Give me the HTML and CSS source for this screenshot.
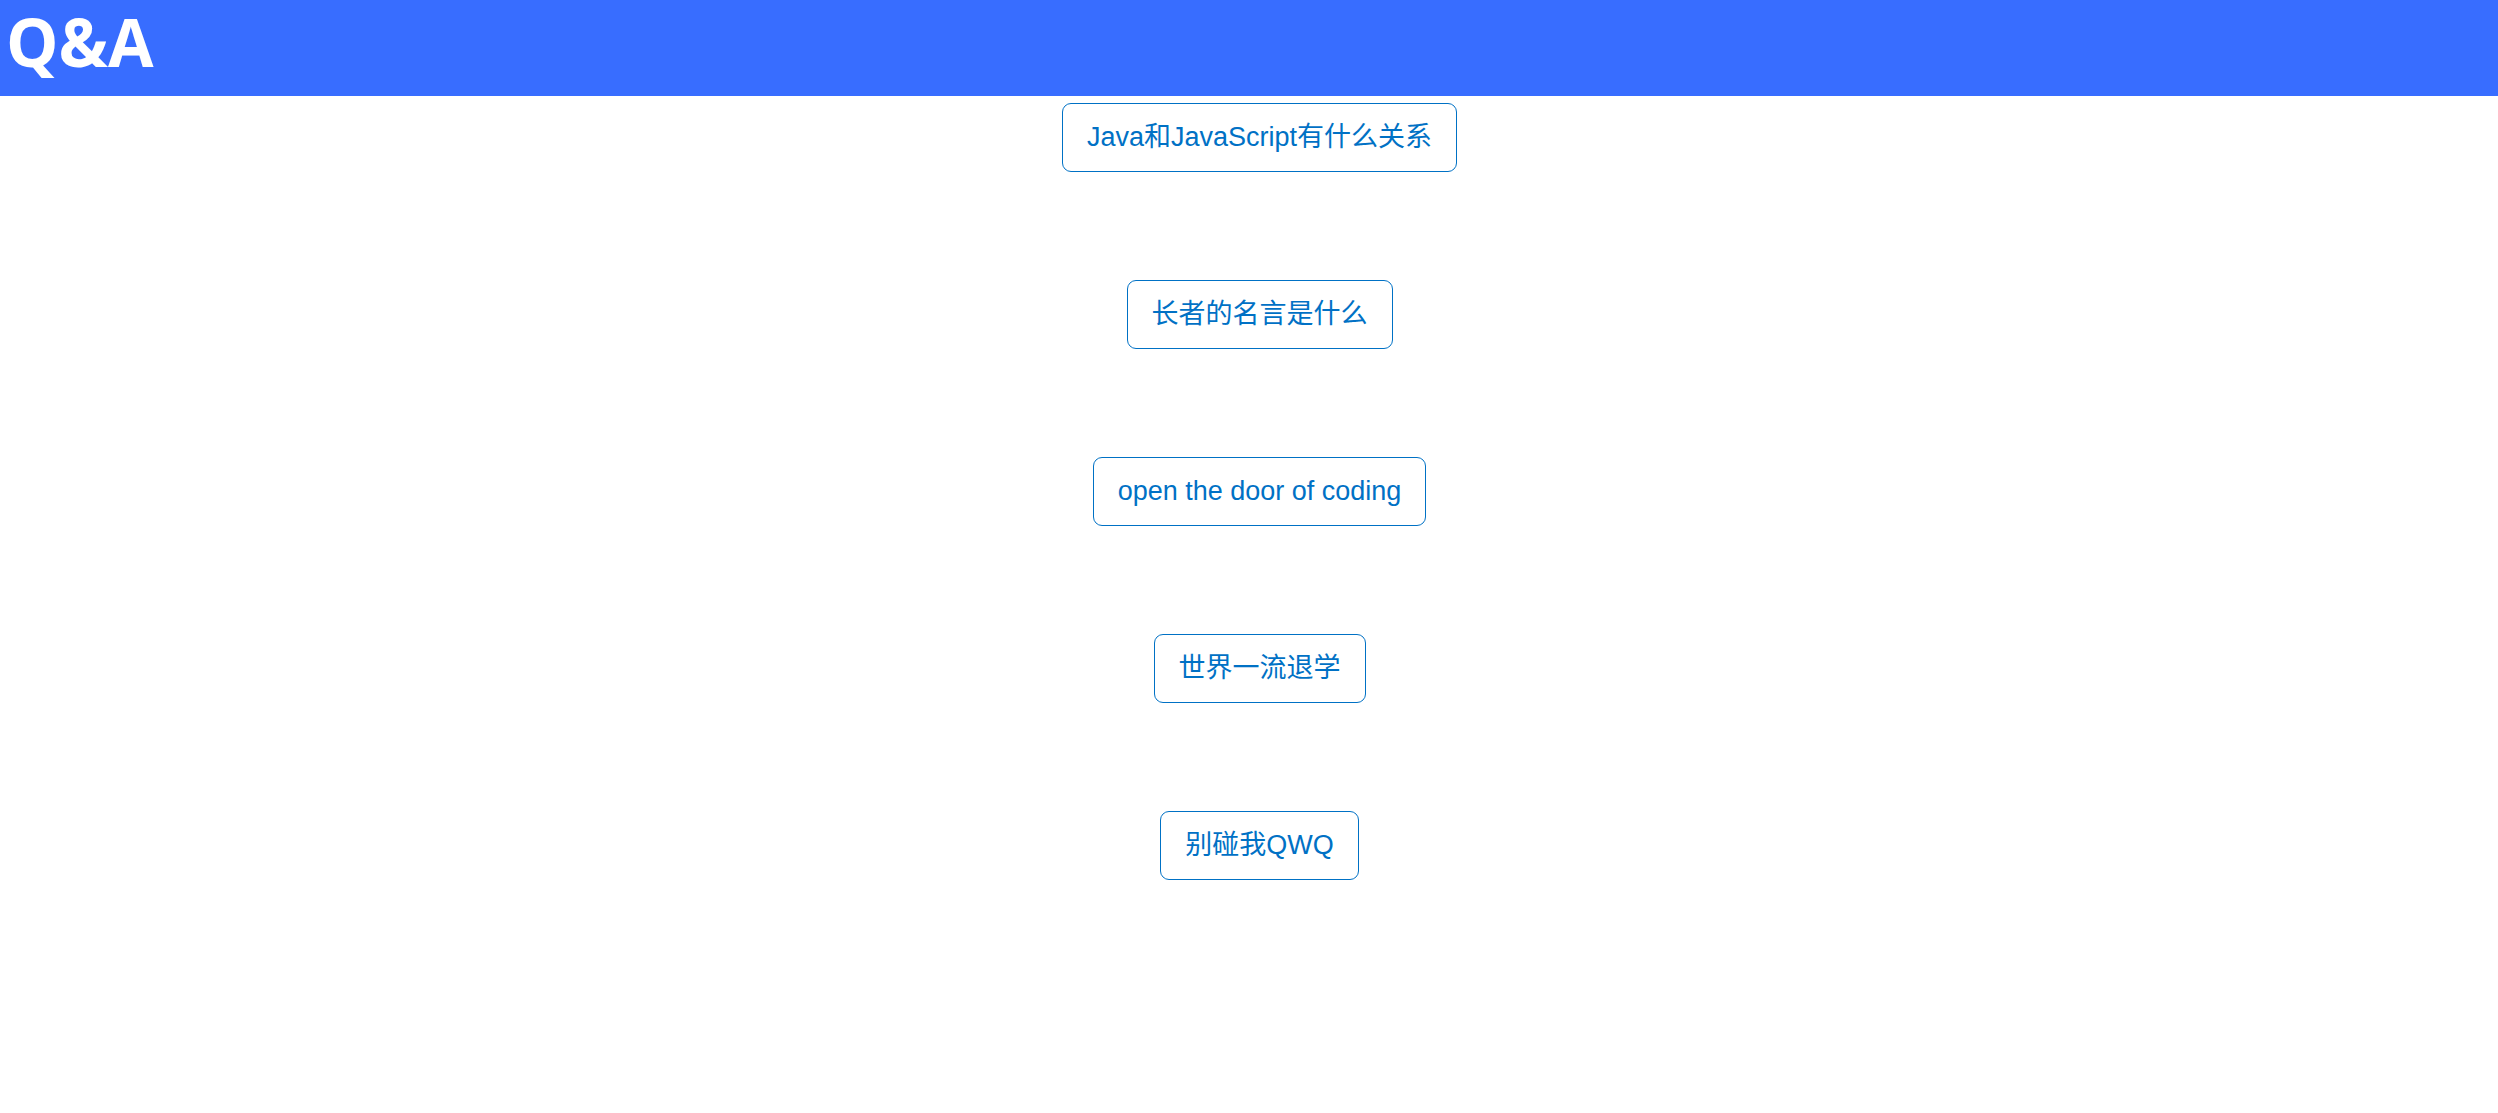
FILE: index.html
```html
<!DOCTYPE html>
<html lang="zh-CN">
<head>
<meta charset="utf-8">
<title>Q&amp;A</title>
<link rel="stylesheet" href="styles.css">
</head>
<body>
<header class="banner"><h1 class="title">Q&amp;A</h1></header>
<main class="questions">
<button class="question" type="button">Java和JavaScript有什么关系</button>
<button class="question" type="button">长者的名言是什么</button>
<button class="question" type="button">open the door of coding</button>
<button class="question" type="button">世界一流退学</button>
<button class="question" type="button">别碰我QWQ</button>
</main>
</body>
</html>
```
FILE: styles.css
```css
body {
  margin: 0;
  background: #fff;
  font-family: "Liberation Sans", "Noto Sans CJK SC", sans-serif;
}
.banner {
  box-sizing: border-box;
  height: 96px;
  padding: 0 6px;
  background: #386dff;
}
.title {
  margin: 0;
  color: #fff;
  font: 700 66px/82px "Open Sans", "Noto Sans", sans-serif;
}
.questions {
  display: flex;
  flex-direction: column;
  align-items: center;
  gap: 108px;
  padding: 7px 0 0 21px;
}
.question {
  box-sizing: border-box;
  height: 69px;
  padding: 0 24px 2px;
  border: 1px solid #0071c5;
  border-radius: 9px;
  background: #fff;
  color: #0071c5;
  font-family: inherit;
  font-size: 27px;
  line-height: 40px;
  white-space: nowrap;
}
```
